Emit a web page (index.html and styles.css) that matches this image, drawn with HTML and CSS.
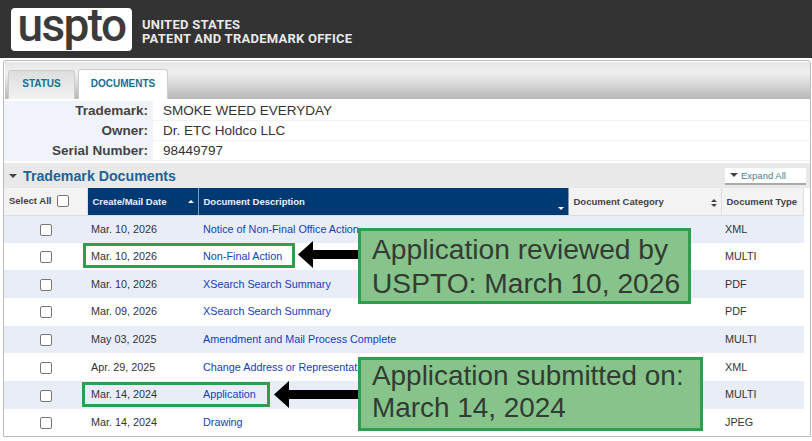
FILE: index.html
```html
<!DOCTYPE html>
<html lang="en">
<head>
    <meta charset="UTF-8">
    <meta name="viewport" content="width=device-width, initial-scale=1.0">
    <title>USPTO Trademark Documents</title>
    <link rel="stylesheet" href="styles.css">
</head>
<body>
    <header class="site-header">
        <div class="logo"><span>uspto</span></div>
        <div class="agency">UNITED STATES<br>PATENT AND TRADEMARK OFFICE</div>
    </header>

    <main class="panel">
        <nav class="tabs">
            <div class="tab">STATUS</div>
            <div class="tab active">DOCUMENTS</div>
        </nav>

        <div class="info">
            <div class="info-label">Trademark:</div><div class="info-value">SMOKE WEED EVERYDAY</div>
            <div class="info-label">Owner:</div><div class="info-value">Dr. ETC Holdco LLC</div>
            <div class="info-label">Serial Number:</div><div class="info-value">98449797</div>
        </div>

        <div class="section-head">
            <h2><span class="tri"></span>Trademark Documents</h2>
            <div class="expand"><span class="tri small"></span>Expand All</div>
        </div>

        <table class="docs">
            <thead>
                <tr>
                    <th class="col-select">Select All <span class="box head-box"></span></th>
                    <th class="col-date sorted">Create/Mail Date <span class="sort-up"></span></th>
                    <th class="col-desc sorted">Document Description <span class="sort-down"></span></th>
                    <th class="col-cat">Document Category <span class="sort-both"></span></th>
                    <th class="col-type">Document Type</th>
                </tr>
            </thead>
            <tbody>
                <tr><td class="check"><span class="box"></span></td><td>Mar. 10, 2026</td><td><a href="#">Notice of Non-Final Office Action</a></td><td></td><td>XML</td></tr>
                <tr><td class="check"><span class="box"></span></td><td>Mar. 10, 2026</td><td><a href="#">Non-Final Action</a></td><td></td><td>MULTI</td></tr>
                <tr><td class="check"><span class="box"></span></td><td>Mar. 10, 2026</td><td><a href="#">XSearch Search Summary</a></td><td></td><td>PDF</td></tr>
                <tr><td class="check"><span class="box"></span></td><td>Mar. 09, 2026</td><td><a href="#">XSearch Search Summary</a></td><td></td><td>PDF</td></tr>
                <tr><td class="check"><span class="box"></span></td><td>May 03, 2025</td><td><a href="#">Amendment and Mail Process Complete</a></td><td></td><td>MULTI</td></tr>
                <tr><td class="check"><span class="box"></span></td><td>Apr. 29, 2025</td><td><a href="#">Change Address or Representation Form</a></td><td></td><td>XML</td></tr>
                <tr><td class="check"><span class="box"></span></td><td>Mar. 14, 2024</td><td><a href="#">Application</a></td><td></td><td>MULTI</td></tr>
                <tr><td class="check"><span class="box"></span></td><td>Mar. 14, 2024</td><td><a href="#">Drawing</a></td><td></td><td>JPEG</td></tr>
            </tbody>
        </table>
    </main>

    <!-- annotations on top of the table -->
    <div class="outline outline-reviewed"></div>
    <svg class="arrow arrow-reviewed" width="60" height="27" viewBox="0 0 60 27"><path d="M0 13.5 15 0V9H60V18H15V27Z"/></svg>
    <div class="callout callout-reviewed">Application reviewed by USPTO: March 10, 2026</div>

    <div class="outline outline-submitted"></div>
    <svg class="arrow arrow-submitted" width="84" height="27" viewBox="0 0 84 27"><path d="M0 13.5 15 0V9H84V18H15V27Z"/></svg>
    <div class="callout callout-submitted">Application submitted on: March 14, 2024</div>
</body>
</html>
```

FILE: styles.css
```css
html, body {
    margin: 0;
    height: 441px;
    overflow: hidden;
}
body {
    position: relative;
    background: #fff;
    font-family: "Liberation Sans", Arial, sans-serif;
    color: #333;
}

/* header */
.site-header {
    height: 58px;
    background: #333;
    display: flex;
    align-items: center;
    padding-left: 11px;
    box-sizing: border-box;
}
.logo {
    width: 121px;
    height: 43px;
    background: #fff;
    border-radius: 4px;
    display: flex;
    justify-content: center;
    align-items: flex-start;
}
.logo span {
    font-family: "Roboto", sans-serif;
    font-weight: 500;
    font-size: 46px;
    line-height: 35px;
    letter-spacing: -1.6px;
    color: #3b3b3b;
}
.agency {
    margin: 5px 0 0 10px;
    font-family: "Roboto", sans-serif;
    font-weight: 700;
    font-size: 13px;
    line-height: 13.5px;
    letter-spacing: 0.25px;
    color: #e8e8e8;
}

/* panel */
.panel {
    margin: 2px 0 0 3px;
    width: 808px;
    height: 377px;
    box-sizing: border-box;
    border: 1px solid #bbb;
    border-radius: 3px 3px 0 0;
}
.tabs {
    height: 37px;
    margin: 1px 0 0 1px;
    padding-left: 3px;
    display: flex;
    align-items: flex-end;
    gap: 3px;
    box-sizing: border-box;
    border-bottom: 1px solid #bbb;
    background: linear-gradient(#e6e6e6, #f0f0f0 30%, #b9b9b9);
}
.tab {
    width: 67px;
    height: 29px;
    margin-bottom: -1px;
    box-sizing: border-box;
    border: 1px solid #ccc;
    border-bottom: 0;
    border-radius: 3px 3px 0 0;
    background: linear-gradient(#dedede, #f2f2f2);
    color: #14708f;
    font-size: 10px;
    font-weight: 700;
    line-height: 26px;
    text-align: center;
}
.tab.active {
    width: 90px;
    height: 30px;
    background: #fff;
    line-height: 28px;
}
.info {
    display: grid;
    grid-template-columns: 149px 1fr;
    grid-auto-rows: 20px;
    margin-top: 2px;
    padding-bottom: 2px;
    line-height: 20px;
}
.info-label {
    background: #f1f3fa;
    text-align: right;
    padding-right: 5px;
    font-weight: 700;
    color: #444;
    font-size: 13.5px;
}
.info-value {
    padding-left: 10px;
    border-bottom: 1px solid #f2f2f2;
    box-sizing: border-box;
    font-size: 13.5px;
}

.section-head {
    height: 25px;
    background: #e9e9e9;
    display: flex;
    justify-content: space-between;
    align-items: center;
}
.section-head h2 {
    margin: 0 0 0 5px;
    font-size: 14.2px;
    color: #1e6496;
    display: flex;
    align-items: center;
}
.tri {
    display: inline-block;
    width: 0;
    height: 0;
    margin-right: 6px;
    border-left: 4px solid transparent;
    border-right: 4px solid transparent;
    border-top: 4px solid #444;
}
.tri.small {
    margin: 0 3px 1px 0;
    border-width: 4px 4px 0;
    vertical-align: middle;
}
.expand {
    width: 81px;
    height: 17px;
    margin: 1px 4px 0 0;
    padding-left: 5px;
    box-sizing: border-box;
    background: #fff;
    border-bottom: 2px solid #aaa;
    color: #3f8298;
    font-size: 9.5px;
    line-height: 16px;
}

/* table */
.docs {
    width: 800px;
    table-layout: fixed;
    border-collapse: collapse;
    font-size: 10.8px;
}
.docs th {
    height: 27px;
    padding: 0 5px;
    background: #f3f3f3;
    border-right: 1px solid #ddd;
    border-bottom: 1px solid #ddd;
    color: #444;
    font-size: 9.5px;
    text-align: left;
    position: relative;
    box-sizing: border-box;
}
.docs th.sorted {
    background: #003a75;
    color: #eef;
    border-right: 1px solid #7f9cba;
}
.col-select { width: 83px; }
.col-date { width: 111px; }
.col-desc { width: 370px; }
.col-cat { width: 153px; }
.docs td {
    height: 27.7px;
    padding: 0 0 1px 4px;
    box-sizing: border-box;
}
.docs td:nth-child(3) {
    padding-left: 5px;
}
.docs tbody tr:nth-child(odd) {
    background: #e9edf8;
}
.docs td.check {
    padding: 0;
    text-align: center;
}
.docs a {
    color: #1440b8;
    text-decoration: none;
}
.box {
    display: inline-block;
    width: 10px;
    height: 10px;
    background: #fff;
    border: 1px solid #777;
    border-radius: 2px;
    vertical-align: middle;
}
.head-box {
    margin-left: 3px;
}
.sort-up, .sort-down, .sort-both {
    position: absolute;
    right: 4px;
    width: 0;
    height: 0;
    border-left: 3px solid transparent;
    border-right: 3px solid transparent;
}
.sort-up {
    top: 12px;
    border-bottom: 3px solid #fff;
}
.sort-down {
    bottom: 5px;
    border-top: 3px solid #fff;
}
.sort-both {
    top: 11px;
    border-bottom: 3px solid #444;
}
.sort-both::after {
    content: "";
    position: absolute;
    left: -3px;
    top: 5px;
    border-left: 3px solid transparent;
    border-right: 3px solid transparent;
    border-top: 3px solid #444;
}

/* annotations */
.outline {
    position: absolute;
    box-sizing: border-box;
    border: 3px solid #2e9e4f;
}
.outline-reviewed {
    left: 83px;
    top: 243px;
    width: 212px;
    height: 25px;
}
.outline-submitted {
    left: 82px;
    top: 382px;
    width: 188px;
    height: 25px;
}
.arrow {
    position: absolute;
    fill: #000;
}
.arrow-reviewed {
    left: 298px;
    top: 241px;
}
.arrow-submitted {
    left: 274px;
    top: 381px;
}
.callout {
    position: absolute;
    box-sizing: border-box;
    background: #86c48b;
    border: 3px solid #2e9e4f;
    color: #333b33;
    font-size: 28.2px;
    padding: 1px 0 0 11px;
}
.callout-reviewed {
    left: 358px;
    top: 228px;
    width: 333px;
    height: 76px;
    line-height: 34px;
}
.callout-submitted {
    left: 358px;
    top: 357px;
    width: 345px;
    height: 74px;
    padding-top: 0;
    font-size: 27.9px;
    line-height: 32px;
}
```
